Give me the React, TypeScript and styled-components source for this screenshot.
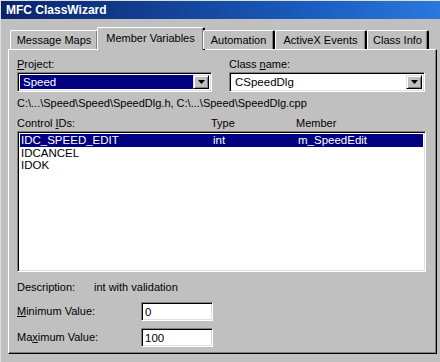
import React from "react";
import styled, { createGlobalStyle } from "styled-components";

const Global = createGlobalStyle`
  html, body { margin: 0; padding: 0; background: #c0c0c0; }
  body { font-family: "Liberation Sans", Arial, sans-serif; font-size: 11px; color: #000; }
`;

const Window = styled.div`
  width: 440px;
  height: 362px;
  box-sizing: border-box;
  background: #c0c0c0;
  border-top: 1px solid #dfdfdf;
  border-left: 1px solid #dfdfdf;
  display: flex;
  flex-direction: column;
  overflow: hidden;
`;

const TitleBar = styled.div`
  height: 18px;
  background: linear-gradient(90deg, #0a246a 0%, #1a5cbf 70%, #2a78dc 100%);
  color: #fff;
  font-weight: bold;
  font-size: 12px;
  display: flex;
  align-items: center;
  padding-left: 5px;
`;

const Body = styled.div`
  padding: 8px 4px 0 7px;
  display: flex;
  flex-direction: column;
`;

const TabRow = styled.div`
  display: flex;
  align-items: flex-end;
  height: 22px;
  padding-left: 2px;
  position: relative;
  z-index: 1;
`;

const Tab = styled.div<{ $active?: boolean; $w: number }>`
  box-sizing: border-box;
  width: ${(p) => p.$w}px;
  height: ${(p) => (p.$active ? 23 : 19)}px;
  margin-left: ${(p) => (p.$active ? -2 : 0)}px;
  margin-right: ${(p) => (p.$active ? -2 : 0)}px;
  margin-bottom: ${(p) => (p.$active ? -1 : 0)}px;
  background: #c0c0c0;
  border-top: 1px solid #fff;
  border-left: 1px solid #fff;
  border-right: 2px solid;
  border-right-color: #000;
  border-radius: 2px 2px 0 0;
  box-shadow: inset -1px 0 0 #808080;
  display: flex;
  align-items: center;
  justify-content: center;
  padding-bottom: ${(p) => (p.$active ? 3 : 0)}px;
  white-space: nowrap;
`;

const Panel = styled.div`
  box-sizing: border-box;
  width: 429px;
  height: 305px;
  border-top: 1px solid #fff;
  border-left: 1px solid #fff;
  border-right: 1px solid #000;
  border-bottom: 1px solid #000;
  box-shadow: inset -1px -1px 0 #808080;
  padding: 8px 10px 0 8px;
  display: flex;
  flex-direction: column;
`;

const ComboGrid = styled.div`
  display: grid;
  grid-template-columns: 195px 196px;
  column-gap: 17px;
`;

const Field = styled.div`
  display: flex;
  flex-direction: column;
  gap: 1px;
`;

const Label = styled.div`
  height: 13px;
  line-height: 13px;
  white-space: nowrap;
`;

const U = styled.span`
  text-decoration: underline;
`;

const Sunken = styled.div`
  box-sizing: border-box;
  background: #fff;
  border-top: 1px solid #808080;
  border-left: 1px solid #808080;
  border-right: 1px solid #fff;
  border-bottom: 1px solid #fff;
  box-shadow: inset 1px 1px 0 #000, inset -1px -1px 0 #dfdfdf;
`;

const Combo = styled(Sunken)`
  height: 20px;
  display: flex;
  padding: 2px;
`;

const ComboText = styled.div<{ $selected?: boolean }>`
  flex: 1;
  display: flex;
  align-items: center;
  padding-left: 3px;
  background: ${(p) => (p.$selected ? "#000080" : "#fff")};
  color: ${(p) => (p.$selected ? "#fff" : "#000")};
  font-size: 11.5px;
`;

const DropButton = styled.div`
  box-sizing: border-box;
  width: 16px;
  background: #c0c0c0;
  border-top: 1px solid #dfdfdf;
  border-left: 1px solid #dfdfdf;
  border-right: 1px solid #000;
  border-bottom: 1px solid #000;
  box-shadow: inset 1px 1px 0 #fff, inset -1px -1px 0 #808080;
  display: flex;
  align-items: center;
  justify-content: center;
`;

const Arrow = () => (
  <svg width="7" height="4" viewBox="0 0 7 4">
    <path d="M0 0h7L3.5 4z" fill="#000" />
  </svg>
);

const PathText = styled.div`
  margin-top: 5px;
  height: 13px;
  line-height: 13px;
  white-space: nowrap;
`;

const Columns = styled.div`
  display: grid;
  grid-template-columns: 194px 85px 1fr;
  height: 13px;
  line-height: 13px;
  margin-top: 7px;
`;

const ListBox = styled(Sunken)`
  margin-top: 1px;
  height: 141px;
  padding: 2px;
  display: flex;
  flex-direction: column;
`;

const Row = styled.div<{ $selected?: boolean }>`
  display: grid;
  grid-template-columns: 192px 85px 1fr;
  height: ${(p) => (p.$selected ? 13 : 12)}px;
  line-height: ${(p) => (p.$selected ? 13 : 12)}px;
  padding-left: 1px;
  background: ${(p) => (p.$selected ? "#000080" : "transparent")};
  color: ${(p) => (p.$selected ? "#fff" : "#000")};
  font-size: 11.5px;
  white-space: nowrap;
`;

const DescRow = styled.div`
  display: grid;
  grid-template-columns: 77px 1fr;
  margin-top: 9px;
  height: 13px;
  line-height: 13px;
`;

const ValueRow = styled.div<{ $top: number }>`
  display: grid;
  grid-template-columns: 124px 72px;
  align-items: center;
  margin-top: ${(p) => p.$top}px;
`;

const Edit = styled(Sunken)`
  height: 19px;
  display: flex;
  align-items: center;
  padding-left: 3px;
  font-size: 11.5px;
`;

const rows = [
  { id: "IDC_SPEED_EDIT", type: "int", member: "m_SpeedEdit", selected: true },
  { id: "IDCANCEL", type: "", member: "" },
  { id: "IDOK", type: "", member: "" },
];

export default function App() {
  return (
    <>
      <Global />
      <Window>
        <TitleBar>MFC ClassWizard</TitleBar>
        <Body>
          <TabRow>
            <Tab $w={89}>Message Maps</Tab>
            <Tab $w={108} $active>Member Variables</Tab>
            <Tab $w={72}>Automation</Tab>
            <Tab $w={92}>ActiveX Events</Tab>
            <Tab $w={62}>Class Info</Tab>
          </TabRow>
          <Panel>
            <ComboGrid>
              <Field>
                <Label><U>P</U>roject:</Label>
                <Combo>
                  <ComboText $selected>Speed</ComboText>
                  <DropButton><Arrow /></DropButton>
                </Combo>
              </Field>
              <Field>
                <Label>Class <U>n</U>ame:</Label>
                <Combo>
                  <ComboText>CSpeedDlg</ComboText>
                  <DropButton><Arrow /></DropButton>
                </Combo>
              </Field>
            </ComboGrid>
            <PathText>C:\...\Speed\Speed\SpeedDlg.h, C:\...\Speed\SpeedDlg.cpp</PathText>
            <Columns>
              <span>Control <U>I</U>Ds:</span>
              <span>Type</span>
              <span>Member</span>
            </Columns>
            <ListBox>
              {rows.map((r) => (
                <Row key={r.id} $selected={r.selected}>
                  <span>{r.id}</span>
                  <span>{r.type}</span>
                  <span>{r.member}</span>
                </Row>
              ))}
            </ListBox>
            <DescRow>
              <span>Description:</span>
              <span>int with validation</span>
            </DescRow>
            <ValueRow $top={8}>
              <Label><U>M</U>inimum Value:</Label>
              <Edit>0</Edit>
            </ValueRow>
            <ValueRow $top={7}>
              <Label>Ma<U>x</U>imum Value:</Label>
              <Edit>100</Edit>
            </ValueRow>
          </Panel>
        </Body>
      </Window>
    </>
  );
}
